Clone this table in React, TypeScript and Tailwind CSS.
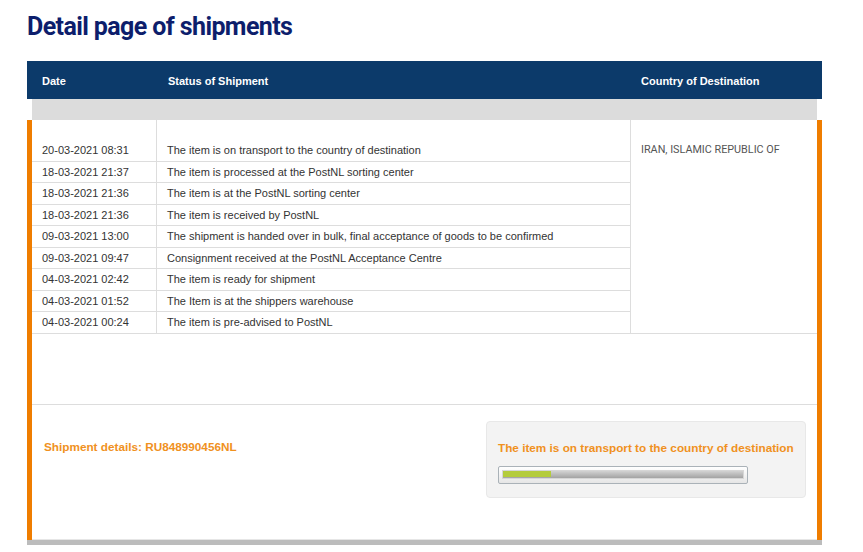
import React from "react";

const rows: [string, string][] = [
  ["20-03-2021 08:31", "The item is on transport to the country of destination"],
  ["18-03-2021 21:37", "The item is processed at the PostNL sorting center"],
  ["18-03-2021 21:36", "The item is at the PostNL sorting center"],
  ["18-03-2021 21:36", "The item is received by PostNL"],
  ["09-03-2021 13:00", "The shipment is handed over in bulk, final acceptance of goods to be confirmed"],
  ["09-03-2021 09:47", "Consignment received at the PostNL Acceptance Centre"],
  ["04-03-2021 02:42", "The item is ready for shipment"],
  ["04-03-2021 01:52", "The Item is at the shippers warehouse"],
  ["04-03-2021 00:24", "The item is pre-advised to PostNL"],
];

export default function App() {
  return (
    <div className="min-h-[552px] bg-white font-['Liberation_Sans',Arial,sans-serif]">
      <div className="ml-[27px] w-[795px]">
        <h1 className="h-[61px] pt-[12px] text-[25px] leading-[30px] font-bold tracking-[-0.6px] text-[#0d1e6c] font-['Roboto',sans-serif]">
          Detail page of shipments
        </h1>

        <div className="flex h-[38px] items-center bg-[#0c3a6a] pt-[2px] text-[11px] font-bold text-white">
          <div className="w-[141px] pl-[15px]">Date</div>
          <div className="w-[473px]">Status of Shipment</div>
          <div>Country of Destination</div>
        </div>

        <div className="ml-[5px] h-[21px] w-[785px] bg-[#dcdcdc]" />

        <div className="flex h-[420px] flex-col border-x-[5px] border-[#ef7d00]">
          <div className="flex border-b border-[#dddddd]">
            <div className="w-[599px] border-r border-[#dddddd] text-[11px] text-[#333333]">
              <div className="flex h-[20px]">
                <div className="w-[125px] border-r border-[#dddddd]" />
              </div>
              {rows.map(([d, s], i) => (
                <div
                  key={i}
                  className={
                    i === rows.length - 1
                      ? "flex h-[21px]"
                      : "flex h-[21.5px] border-b border-[#dddddd]"
                  }
                >
                  <div className="flex w-[125px] items-center border-r border-[#dddddd] pl-[10px]">
                    {d}
                  </div>
                  <div className="flex items-center pl-[10px]">{s}</div>
                </div>
              ))}
            </div>
            <div className="flex-1 pt-[20px]">
              <div className="flex h-[20px] items-center pl-[10px] text-[10.8px] text-[#555555] font-['Roboto',sans-serif]">
                IRAN, ISLAMIC REPUBLIC OF
              </div>
            </div>
          </div>

          <div className="h-[71px] border-b border-[#dddddd]" />

          <div className="flex flex-1 justify-between border-b border-[#e6e6e6]">
            <div className="pl-[12px] pt-[35px] text-[11.75px] leading-[14px] font-bold text-[#f0911e]">
              Shipment details: RU848990456NL
            </div>
            <div className="mr-[11px] mt-[16px] h-[77px] w-[320px] rounded-[4px] border border-[#e8e8e8] bg-[#f3f3f3] pl-[11px] pt-[19px]">
              <div className="text-[11.75px] leading-[14px] font-bold text-[#f0911e]">
                The item is on transport to the country of destination
              </div>
              <div className="mt-[11px] h-[18px] w-[250px] rounded-[2px] border border-[#aab2b8] bg-[linear-gradient(#ffffff,#e6e6e6)] pl-[3px] pr-[3px] pt-[3px]">
                <div className="h-[9px] w-full border border-[#d6d6d6] bg-[linear-gradient(#d2d2d2,#a3a3a3)]">
                  <div className="h-[6px] w-[20%] bg-[#b4cc3c]" />
                </div>
              </div>
            </div>
          </div>
        </div>

        <div className="h-[5px] bg-[#bcbcbc]" />
      </div>
    </div>
  );
}
